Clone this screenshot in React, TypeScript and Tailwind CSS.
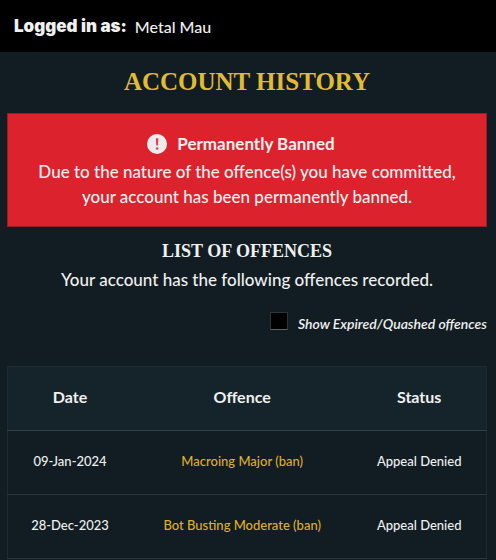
import React, { useState } from 'react';

const offences = [
  { date: '09-Jan-2024', offence: 'Macroing Major (ban)', status: 'Appeal Denied' },
  { date: '28-Dec-2023', offence: 'Bot Busting Moderate (ban)', status: 'Appeal Denied' },
];

const AlertIcon = () => (
  <svg viewBox="0 0 20 20" className="h-5 w-5" aria-hidden="true">
    <circle cx="10" cy="10" r="10" fill="#ececee" />
    <path d="M8.8 4.2h2.6l-.5 7.4H9.3z" fill="#e0404a" />
    <circle cx="10.1" cy="14.5" r="1.3" fill="#e0404a" />
  </svg>
);

const App = () => {
  const [showExpired, setShowExpired] = useState(false);

  return (
    <div className="min-h-screen bg-[#111d22] font-['Lato',sans-serif] font-medium text-[#f0f0f0]">
      <header className="flex h-13 items-center gap-2 bg-black px-3.5 pt-0.5 text-base">
        <strong className="font-['Inter',sans-serif] text-[17px] font-black">Logged in as:</strong>
        <span>Metal Mau</span>
      </header>

      <main className="pl-[7px] pr-[9px] text-center">
        <h1 className="pt-3 font-['Liberation_Serif',serif] text-[25px] leading-9 font-bold text-[#e1bb34]">
          ACCOUNT HISTORY
        </h1>

        {/* Ban notice */}
        <section className="mt-[13px] border border-[#9d1c24] bg-[#dc232d] px-6 pt-[15px] pb-[17px]">
          <div className="flex h-[30px] items-center justify-center gap-2.5 pr-3">
            <AlertIcon />
            <h2 className="text-[17px] font-bold">Permanently Banned</h2>
          </div>
          <p className="text-[17px] leading-[25px]">
            Due to the nature of the offence(s) you have committed,
            <br />
            your account has been permanently banned.
          </p>
        </section>

        <h2 className="mt-3 font-['Liberation_Serif',serif] text-lg leading-6 font-bold">LIST OF OFFENCES</h2>
        <p className="mt-1 text-[17px] leading-[25px]">Your account has the following offences recorded.</p>

        {/* Filter */}
        <div className="mt-5 flex items-end justify-end gap-2.5">
          <input
            id="show-expired"
            type="checkbox"
            checked={showExpired}
            onChange={(e) => setShowExpired(e.target.checked)}
            className="mb-1 h-[18px] w-[18px] appearance-none border border-[#2d3538] border-b-[#5d6264] bg-black checked:bg-[#e1bb34]"
          />
          <label htmlFor="show-expired" className="text-sm leading-5 font-semibold italic">
            Show Expired/Quashed offences
          </label>
        </div>

        <table className="mt-8 w-full table-fixed border-collapse border border-[#1a2b31]">
          <thead>
            <tr className="h-16 border-b border-[#2f4147] bg-[#15242a] text-base">
              <th className="w-[26%] pb-1 font-bold">Date</th>
              <th className="w-[46%] pb-1 font-bold">Offence</th>
              <th className="w-[28%] pb-1 font-bold">Status</th>
            </tr>
          </thead>
          <tbody>
            {offences.map((row) => (
              <tr key={row.date} className="h-16 border-b border-[#27373c] text-[13px]">
                <td className="pb-0.5">{row.date}</td>
                <td className="pb-0.5">
                  <a href="#" className="text-[#dfaf2e] hover:underline">{row.offence}</a>
                </td>
                <td className="pb-0.5">{row.status}</td>
              </tr>
            ))}
          </tbody>
        </table>
      </main>
    </div>
  );
};

export default App;
